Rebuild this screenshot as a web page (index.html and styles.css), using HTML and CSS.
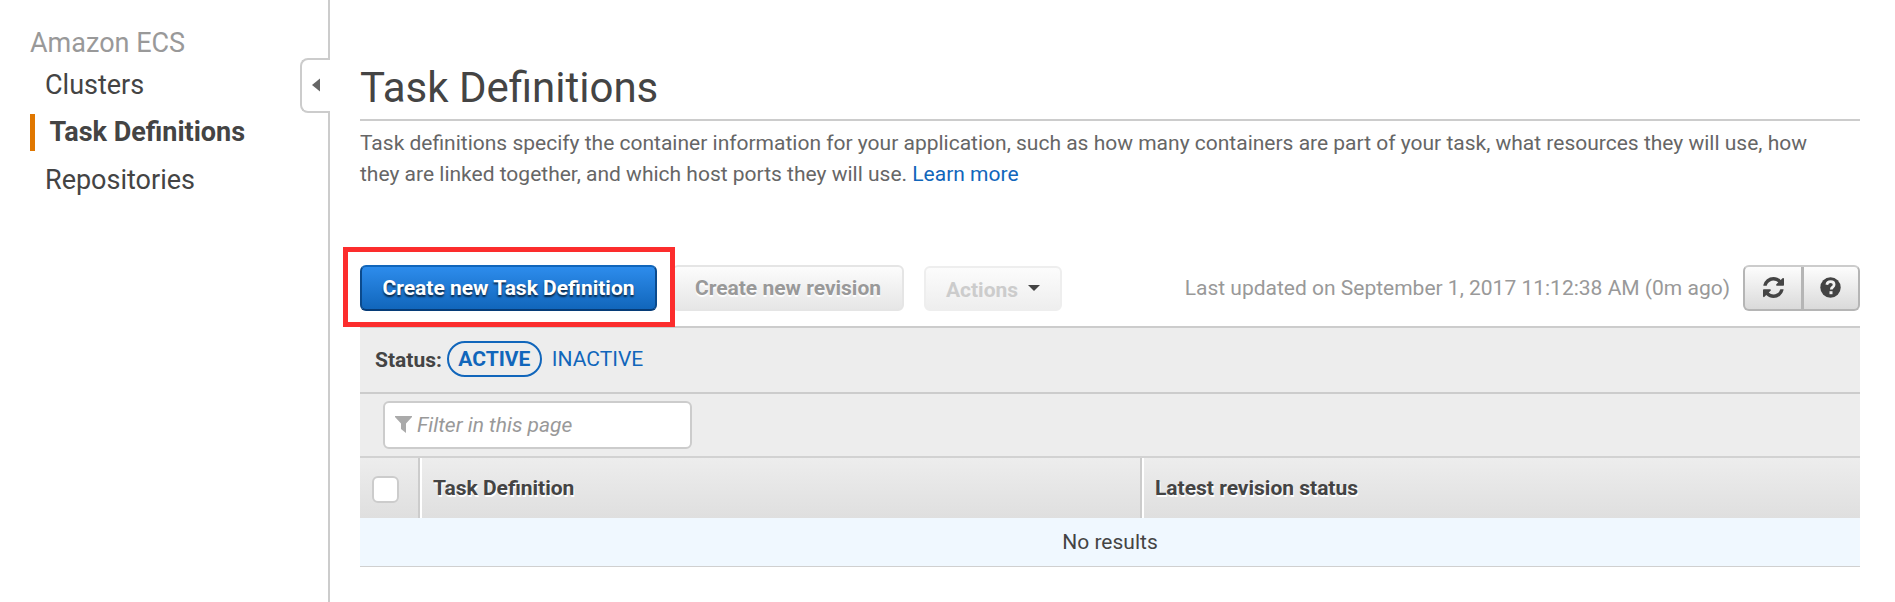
FILE: index.html
```
<!DOCTYPE html>
<html lang="en">
<head>
<meta charset="utf-8">
<title>Task Definitions</title>
<link rel="stylesheet" href="styles.css">
</head>
<body>
<div class="app">
  <nav class="sidebar">
    <div class="service">Amazon ECS</div>
    <a class="nav-item">Clusters</a>
    <a class="nav-item active">Task Definitions</a>
    <a class="nav-item last">Repositories</a>
  </nav>
  <div class="rail">
    <div class="rail-top"></div>
    <button class="collapse" aria-label="Collapse navigation"><svg width="8" height="14" viewBox="0 0 8 14"><path d="M8 0.500V13.500L0 7Z" fill="#666"/></svg></button>
    <div class="rail-bottom"></div>
  </div>
  <main class="content">
    <h1>Task Definitions</h1>
    <p class="intro">Task definitions specify the container information for your application, such as how many containers are part of your task, what resources they will use, how they are linked together, and which host ports they will use. <a>Learn more</a></p>
    <div class="toolbar">
      <div class="highlight"><button class="btn primary">Create new Task Definition</button></div>
      <button class="btn disabled">Create new revision</button>
      <button class="btn actions"><span>Actions</span><svg width="12" height="6" viewBox="0 0 12 6"><path d="M0 0H12L6 6Z" fill="#444"/></svg></button>
      <span class="updated">Last updated on September 1, 2017 11:12:38 AM (0m ago)</span>
      <div class="group">
        <button aria-label="Refresh"><svg width="21" height="21" viewBox="0 0 1536 1536"><path fill="#444" d="M1511 928q0 5-1 7-64 268-268 434.500T764 1536q-146 0-282.500-55T238 1324l-129 129q-19 19-45 19t-45-19-19-45V960q0-26 19-45t45-19h448q26 0 45 19t19 45-19 45l-137 137q71 66 161 102t187 36q134 0 250-65t186-179q11-17 53-117 8-23 30-23h192q13 0 22.500 9.500t9.500 22.500zm25-800v448q0 26-19 45t-45 19h-448q-26 0-45-19t-19-45 19-45l138-138Q969 256 768 256q-134 0-250 65T332 500q-11 17-53 117-8 23-30 23H50q-13 0-22.500-9.500T18 608v-7q65-268 270-434.500T768 0q146 0 284 55.500T1297 212l130-129q19-19 45-19t45 19 19 45z"/></svg></button>
        <button aria-label="Help"><svg width="21" height="21" viewBox="0 0 21 21"><circle cx="10.500" cy="10.500" r="10.200" fill="#444"/><path d="M6.800 7.800C7.300 5 9 4.700 10.700 4.700C12.800 4.700 14.100 6 14.100 7.700C14.100 10.200 11.300 10.100 11.300 12.400" fill="none" stroke="#f3f3f3" stroke-width="2.700"/><rect x="9.500" y="14.200" width="3" height="3" fill="#eee"/></svg></button>
      </div>
    </div>
    <section class="panel">
      <div class="status"><b>Status:</b><a class="pill">ACTIVE</a><a>INACTIVE</a></div>
      <div class="filter"><label class="field"><svg width="17" height="17" viewBox="0 0 17 17"><path d="M0 0H17V1L11 7.500V17L6 13V7.500L0 1Z" fill="#aaa"/></svg><span>Filter in this page</span></label></div>
      <div class="thead">
        <div class="check"><i></i></div>
        <div class="col-name">Task Definition</div>
        <div class="col-status">Latest revision status</div>
      </div>
      <div class="empty">No results</div>
    </section>
  </main>
</div>
</body>
</html>
```
FILE: styles.css
```
* { box-sizing: border-box; }
body { margin: 0; background: #fff; color: #444; font: 21px/31px Roboto, "Liberation Sans", sans-serif; }
button { font: inherit; margin: 0; padding: 0; }
a { color: #1166bb; }
svg { display: block; flex: none; }
.app { display: flex; height: 602px; overflow: hidden; }

.sidebar { width: 300px; padding: 23px 0 0 30px; font-size: 27px; line-height: 40px; }
.service { color: #999; }
.nav-item { display: flex; align-items: center; height: 37px; color: #444; padding-left: 15px; margin-top: 3px; }
.nav-item.active { font-weight: 700; border-left: 5px solid #e07700; padding: 0 0 2px 14.5px; margin-top: 11px; }
.nav-item.last { margin-top: 10px; }

.rail { width: 30px; display: flex; flex-direction: column; }
.rail-top { height: 58px; border-right: 2px solid #ccc; }
.collapse { width: 30px; height: 55px; padding: 0 0 1px 10px; background: #fff; border: 2px solid #ccc; border-right: 0; border-radius: 8px 0 0 8px; }
.rail-bottom { flex: 1; border-right: 2px solid #ccc; }

.content { width: 1530px; padding: 61px 0 0 30px; }
h1 { margin: 0; height: 60px; font-size: 42px; line-height: 54px; font-weight: 400; border-bottom: 2px solid #ccc; }
.intro { margin: 7px 0 0; height: 62px; padding-right: 30px; color: #666; }
.toolbar { display: flex; margin: 57px 0 0 -17px; height: 79px; }
.highlight { width: 332px; height: 80px; border: 5px solid #fc2d2d; padding: 13px 12px; margin-right: -3px; z-index: 1; flex: none; }
.btn { height: 46px; border-radius: 6px; font-weight: 700; display: flex; align-items: center; justify-content: center; flex: none; }
.primary { width: 297px; color: #fff; border: 2px solid; border-color: #1166bb #0b4a8c #063c78; background: linear-gradient(#2d8cec, #1166bb); text-shadow: 0 2px 2px rgba(0,0,0,.7); }
.disabled { width: 232px; margin-top: 18px; color: #999; border: 2px solid #e5e5e5; background: linear-gradient(#fcfcfc, #e6e6e6); text-shadow: 0 2px 1px #fff; }
.actions { width: 138px; height: 45px; margin: 19px 0 0 20px; color: #ccc; border: 2px solid #eee; background: linear-gradient(#fcfcfc, #eee); gap: 10px; }
.actions span { padding-top: 4px; }
.actions svg { margin-bottom: 2px; }
.updated { margin: 26px 13px 0 auto; color: #999; white-space: nowrap; }
.group { display: flex; width: 117px; height: 46px; margin-top: 18px; border: 2px solid; border-color: #ccc #b5b5b5 #b5b5b5; border-radius: 6px; background: linear-gradient(#fdfdfd, #dadada); }
.group button { flex: 1; border: 0; background: none; display: flex; align-items: center; justify-content: center; padding: 0 0 2px 1px; }
.group button + button { border-left: 3px solid #b5b5b5; padding-left: 0; }

.panel { border-top: 2px solid #ccc; background: #ededed; }
.status { height: 64px; display: flex; align-items: center; padding: 0 0 2px 15px; }
.status b { margin-right: 5px; padding-top: 2px; }
.pill { width: 95px; height: 36px; border: 2px solid #1166bb; border-radius: 18px; font-weight: 700; display: flex; align-items: center; justify-content: center; margin-right: 10px; }
.filter { height: 64px; border-top: 2px solid #ccc; padding: 7px 23px; }
.field { display: flex; width: 309px; height: 48px; align-items: center; gap: 5px; padding-left: 10px; background: #fff; border: 2px solid #ccc; border-radius: 6px; color: #999; font-style: italic; }
.field svg { margin-bottom: 2px; }
.thead { height: 62px; display: flex; border-top: 2px solid #d2d2d2; background: linear-gradient(#ededed, #dfdfdf); font-weight: 700; line-height: 60px; text-shadow: 1px 2px 0 #fff; }
.check { width: 60px; border-right: 2px solid #ccc; padding: 18px 0 0 12px; }
.check i { display: block; width: 27px; height: 27px; background: #fff; border: 2px solid #ccc; border-radius: 6px; }
.col-name { width: 722px; border-left: 2px solid #fff; border-right: 2px solid #ccc; padding-left: 11px; }
.col-status { flex: 1; border-left: 2px solid #fff; padding-left: 11px; }
.empty { height: 49px; line-height: 48px; text-align: center; background: #f0f8ff; border-bottom: 1px solid #d0d0d0; }
```
